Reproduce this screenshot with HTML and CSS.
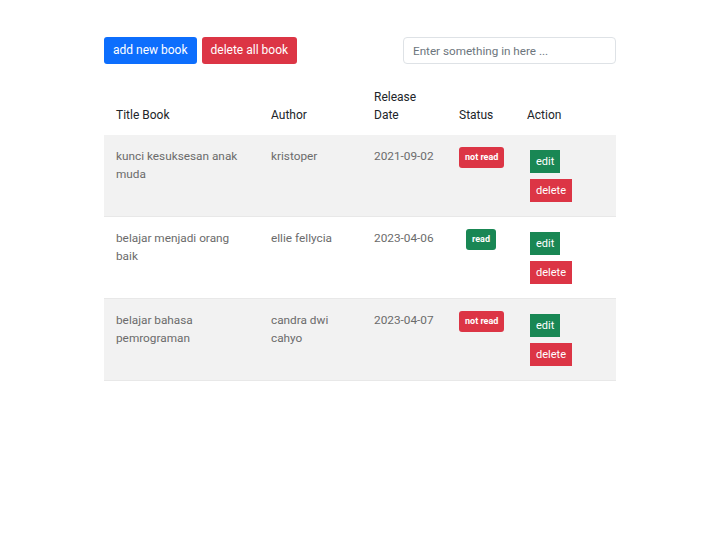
FILE: index.html
```html
<!DOCTYPE html>
<html>
<head>
<meta charset="utf-8">
<link rel="stylesheet" href="styles.css">
</head>
<body>
<div class="container">
  <div class="toolbar">
    <div class="actions">
      <button class="btn btn-primary">add new book</button>
      <button class="btn btn-danger">delete all book</button>
    </div>
    <input class="search" type="text" placeholder="Enter something in here ...">
  </div>
  <table class="books">
    <colgroup>
      <col class="c-title"><col class="c-author"><col class="c-date"><col class="c-status"><col class="c-action">
    </colgroup>
    <thead>
      <tr><th>Title Book</th><th>Author</th><th>Release Date</th><th>Status</th><th>Action</th></tr>
    </thead>
    <tbody>
      <tr class="striped">
        <td>kunci kesuksesan anak muda</td><td>kristoper</td><td>2021-09-02</td>
        <td class="status"><span class="badge badge-danger">not read</span></td>
        <td class="action"><button class="sbtn sbtn-success">edit</button><button class="sbtn sbtn-danger">delete</button></td>
      </tr>
      <tr>
        <td>belajar menjadi orang baik</td><td>ellie fellycia</td><td>2023-04-06</td>
        <td class="status"><span class="badge badge-success">read</span></td>
        <td class="action"><button class="sbtn sbtn-success">edit</button><button class="sbtn sbtn-danger">delete</button></td>
      </tr>
      <tr class="striped">
        <td>belajar bahasa pemrograman</td><td>candra dwi cahyo</td><td>2023-04-07</td>
        <td class="status"><span class="badge badge-danger">not read</span></td>
        <td class="action"><button class="sbtn sbtn-success">edit</button><button class="sbtn sbtn-danger">delete</button></td>
      </tr>
    </tbody>
  </table>
</div>
</body>
</html>
```
FILE: styles.css
```css
body {
  margin: 0;
  font-family: Roboto, "Liberation Sans", sans-serif;
  font-size: 12px;
  color: #212529;
  background: #fff;
}
.container {
  width: 512px;
  margin: 0 auto;
  padding-top: 37px;
}
.toolbar {
  display: flex;
  justify-content: space-between;
  align-items: center;
}
.actions {
  display: flex;
  gap: 5px;
}
.btn {
  font-family: inherit;
  font-size: 12px;
  color: #fff;
  border: none;
  border-radius: 3px;
  height: 27px;
  padding: 0 9px;
  line-height: 27px;
}
.btn-primary { background: #0d6efd; }
.btn-danger { background: #dc3545; }
.search {
  width: 213px;
  height: 27px;
  box-sizing: border-box;
  border: 1px solid #dee2e6;
  border-radius: 4px;
  padding: 0 9px;
  font-family: inherit;
  font-size: 11.7px;
  color: #212529;
  outline: none;
}
.search::placeholder { color: #6c757d; }
.books {
  width: 512px;
  margin-top: 12px;
  border-collapse: collapse;
  table-layout: fixed;
}
.c-title { width: 155px; }
.c-author { width: 103px; }
.c-date { width: 85px; }
.c-status { width: 68px; }
.c-action { width: 101px; }
th, td {
  padding: 12px;
  text-align: left;
  line-height: 18px;
  font-weight: 400;
}
th {
  color: #212529;
  vertical-align: bottom;
  padding-bottom: 11px;
}
td {
  vertical-align: top;
  color: #6b6b6b;
  font-size: 11.8px;
  border-bottom: 1px solid #e8e8e8;
}
.striped td { background: #f2f2f2; }
td.status { text-align: center; }
.badge {
  display: inline-block;
  white-space: nowrap;
  font-size: 9px;
  font-weight: 700;
  color: #fff;
  border-radius: 3px;
  line-height: 21px;
  padding: 0 6px;
}
.badge-danger { background: #dc3545; }
.badge-success { background: #198754; }
.sbtn {
  display: block;
  font-family: inherit;
  font-size: 11px;
  color: #fff;
  border: none;
  border-radius: 0;
  height: 23px;
  line-height: 23px;
  padding: 0 6px;
  margin: 3px 3px 2px;
}
.sbtn + .sbtn { margin-top: 6px; }
.sbtn-success { background: #198754; }
.sbtn-danger { background: #dc3545; }
```
